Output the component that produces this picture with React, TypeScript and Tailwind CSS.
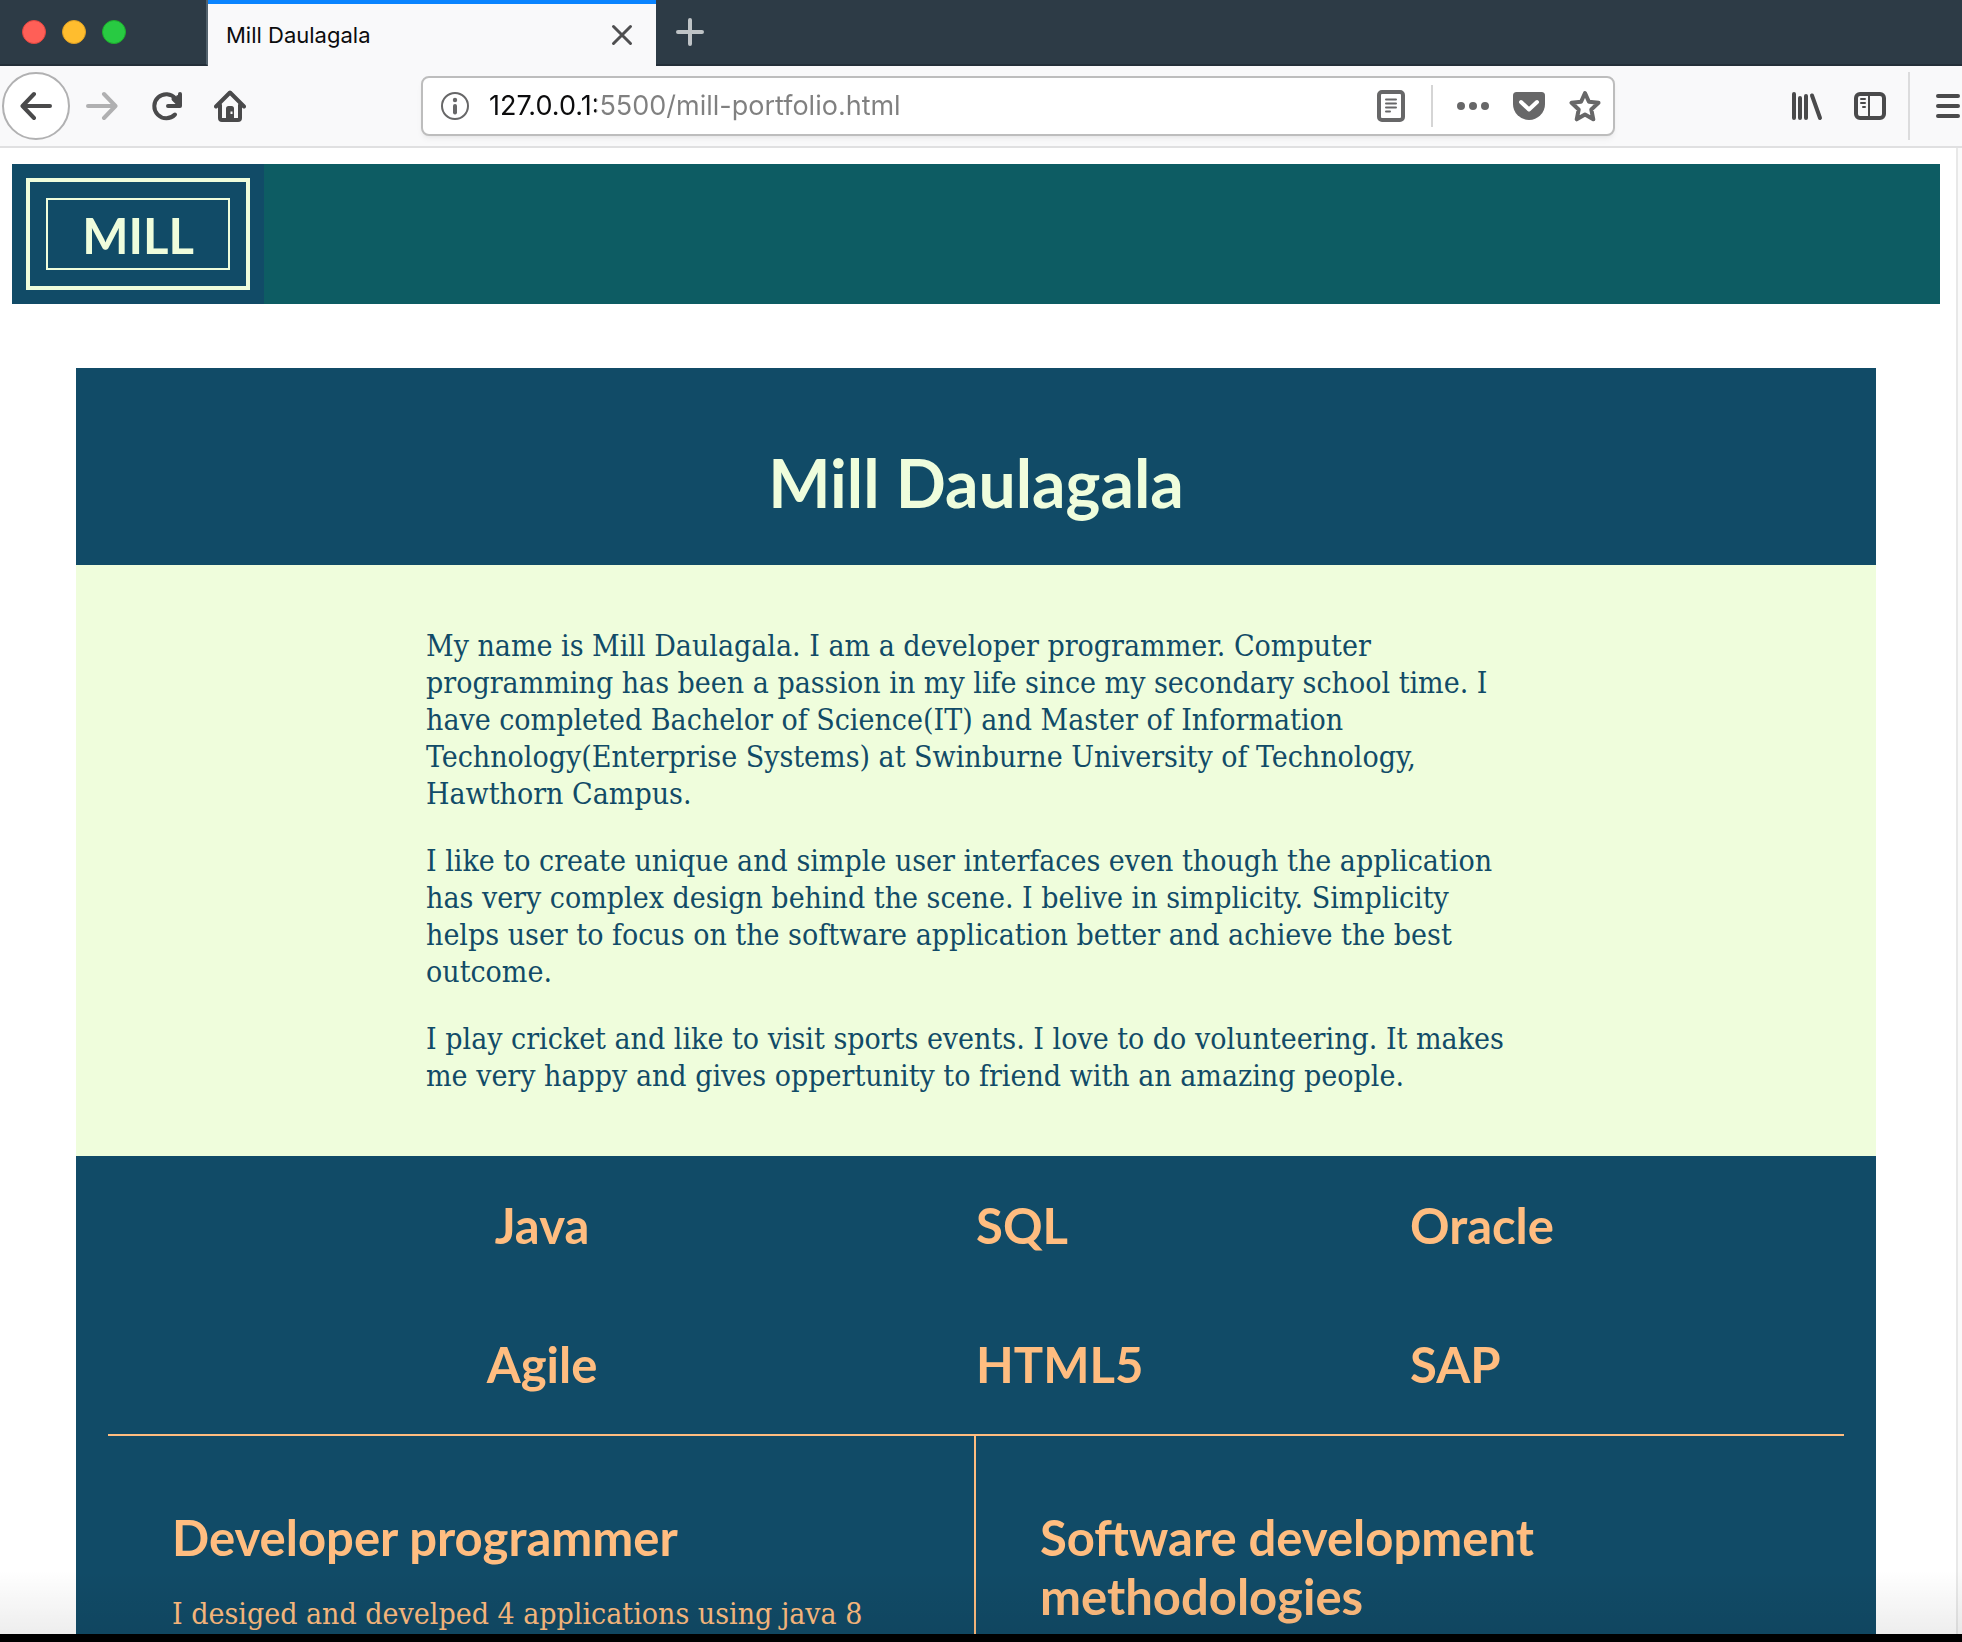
import type { ReactNode } from "react";

const skills = [
  ["Java", "SQL", "Oracle"],
  ["Agile", "HTML5", "SAP"],
];

const about = [
  "My name is Mill Daulagala. I am a developer programmer. Computer programming has been a passion in my life since my secondary school time. I have completed Bachelor of Science(IT) and Master of Information Technology(Enterprise Systems) at Swinburne University of Technology, Hawthorn Campus.",
  "I like to create unique and simple user interfaces even though the application has very complex design behind the scene. I belive in simplicity. Simplicity helps user to focus on the software application better and achieve the best outcome.",
  "I play cricket and like to visit sports events. I love to do volunteering. It makes me very happy and gives oppertunity to friend with an amazing people.",
];

function IconButton({ label, className = "", children }: { label: string; className?: string; children: ReactNode }) {
  return (
    <button type="button" aria-label={label} className={`flex size-8 shrink-0 items-center justify-center ${className}`}>
      {children}
    </button>
  );
}

function Icon({ children }: { children: ReactNode }) {
  return (
    <svg viewBox="0 0 32 32" className="size-8 shrink-0" fill="none" stroke="currentColor" strokeWidth="4" strokeLinecap="round" strokeLinejoin="round" aria-hidden="true">
      {children}
    </svg>
  );
}

function TabBar() {
  return (
    <div className="flex h-[66px] shrink-0 bg-[#2d3b46]">
      <div className="flex w-[208px] shrink-0 items-center gap-4 border-r-2 border-b-2 border-r-[#53626d] border-b-[#242f39] pl-[22px]">
        <button type="button" aria-label="Close window" className="size-6 rounded-full border border-[#e2463f] bg-[#ff5f57]" />
        <button type="button" aria-label="Minimise window" className="size-6 rounded-full border border-[#dfa023] bg-[#ffbd2e]" />
        <button type="button" aria-label="Zoom window" className="size-6 rounded-full border border-[#1dad2b] bg-[#28ca42]" />
      </div>
      <div className="flex w-[448px] shrink-0 items-center justify-between border-t-4 border-[#0a84ff] bg-[#f9f9fa] pr-[18px] pl-[18px]">
        <span className="font-['Inter',sans-serif] text-[22px] text-[#0c0c0d]">Mill Daulagala</span>
        <IconButton label="Close tab" className="text-[#4f4f50]">
          <Icon>
            <path d="M7.500 7.500l17 17M24.500 7.500l-17 17" strokeWidth="3" />
          </Icon>
        </IconButton>
      </div>
      <div className="flex flex-1 items-center border-b-2 border-[#242f39] pl-[18px]">
        <IconButton label="New tab" className="text-[#bec3c6]">
          <Icon>
            <path d="M16 4v24M4 16h24" />
          </Icon>
        </IconButton>
      </div>
    </div>
  );
}

function Toolbar() {
  return (
    <div className="flex h-[82px] shrink-0 items-center border-b-2 border-[#e0e0e1] bg-[#f9f9fa] text-[#4a4a4b]">
      <button type="button" aria-label="Back" className="ml-0.5 flex size-[68px] shrink-0 items-center justify-center rounded-full border-2 border-[#b1b1b2] bg-white">
        <Icon>
          <path d="M30 16H3M14 4L2.500 16L14 28" />
        </Icon>
      </button>
      <IconButton label="Forward" className="ml-4 text-[#b0b0b1]">
        <Icon>
          <path d="M2 16h27M18 4l11.500 12L18 28" />
        </Icon>
      </IconButton>
      <IconButton label="Reload" className="ml-8">
        <Icon>
          <path d="M25.500 8.500A12 12 0 1 0 25 24.500" />
          <path d="M30 4v12H18" />
          <path d="M23.500 9l5 5M28 7v8" />
        </Icon>
      </IconButton>
      <IconButton label="Home" className="ml-8">
        <Icon>
          <path d="M2 16.500L16 2.500L30 16.500" />
          <path d="M6 15v13q0 2 2 2h16q2 0 2-2V15" />
          <path d="M12 29V18.500q0-2.500 2.500-2.500h3q2.500 0 2.500 2.500V29z" fill="currentColor" stroke="none" />
          <rect x="16.500" y="21.500" width="2" height="2.500" fill="#f9f9fa" stroke="none" />
        </Icon>
      </IconButton>

      <div className="mr-[177px] ml-[175px] flex h-[60px] min-w-0 flex-1 items-center rounded-lg border-2 border-[#bdbdbd] bg-white pr-3 pl-4 text-[#676768] shadow-md shadow-black/5">
        <IconButton label="Site information">
          <Icon>
            <circle cx="16" cy="16" r="13" strokeWidth="2" />
            <circle cx="16" cy="10" r="2.200" fill="currentColor" stroke="none" />
            <path d="M16 16v6.500" />
          </Icon>
        </IconButton>
        <input
          type="text"
          aria-label="Address"
          defaultValue="127.0.0.1:5500/mill-portfolio.html"
          className="ml-[18px] min-w-0 flex-1 bg-[linear-gradient(90deg,#0c0c0d_107px,#808080_107px)] bg-clip-text font-['Inter',sans-serif] text-[27px] text-transparent outline-none"
        />
        <IconButton label="Reader view">
          <Icon>
            <rect x="4" y="2" width="24" height="28" rx="3" />
            <path d="M11 9.500h10M11 13.500h10M11 17.500h10M11 21.500h4" strokeWidth="2" />
          </Icon>
        </IconButton>
        <div className="mx-6 h-[42px] w-0.5 bg-[#d5d5d5]" />
        <IconButton label="Page actions" className="mr-6">
          <Icon>
            <path d="M4 16h0M16 16h0M28 16h0" strokeWidth="8" />
          </Icon>
        </IconButton>
        <IconButton label="Save to Pocket" className="mr-6">
          <Icon>
            <path d="M3.500 2h25Q32 2 32 5.500V14a16 16 0 0 1-32 0V5.500Q0 2 3.500 2z" fill="currentColor" stroke="none" />
            <path d="M8 12l8 7.500L24 12" stroke="#ffffff" />
          </Icon>
        </IconButton>
        <IconButton label="Bookmark this page">
          <Icon>
            <path d="M16 3l3.900 8.800l9.600 1l-7.200 6.700l2 9.800L16 24.500l-8.300 4.800l2-9.800L2.500 12.800l9.600-1z" />
          </Icon>
        </IconButton>
      </div>

      <IconButton label="Library">
        <Icon>
          <path d="M2 4v24M8 8v20M14 6v22M20 5.500L28 28" />
        </Icon>
      </IconButton>
      <IconButton label="Sidebars" className="ml-[30px]">
        <Icon>
          <rect x="2" y="4" width="28" height="24" rx="4" />
          <path d="M15 4v24M7 9h4M7 13h4M9 17h2" strokeWidth="2" />
        </Icon>
      </IconButton>
      <div className="ml-[22px] h-[68px] w-0.5 shrink-0 bg-[#dcdcdd]" />
      <IconButton label="Open menu" className="mr-[-4px] ml-6">
        <Icon>
          <path d="M4 6h20M4 16h20M4 26h20" />
        </Icon>
      </IconButton>
    </div>
  );
}

function Portfolio() {
  return (
    <div className="flex flex-1 flex-col pt-4 pr-4 pl-3">
      <nav className="flex shrink-0 bg-[#0d5c63]">
        <a href="#top" className="bg-[#114b67] p-3.5 text-[#effddc]">
          <span className="block border-4 border-[#effddc] p-4">
            <span className="block w-[184px] border-2 border-[#effddc] pt-0.5 text-center font-['Lato',sans-serif] text-[49px] leading-[66px] font-bold">MILL</span>
          </span>
        </a>
      </nav>

      <main id="top" className="mx-16 mt-16 flex flex-1 flex-col bg-[#114b67]">
        <h1 className="px-8 pt-[75px] pb-[42px] text-center font-['Lato',sans-serif] text-[66px] leading-[80px] font-bold text-[#effddc]">Mill Daulagala</h1>

        <section className="flex flex-col gap-[30px] bg-[#effddc] px-[350px] pt-[62px] pb-[62px] font-['DejaVu_Serif_Condensed','DejaVu_Serif',serif] text-[30px] leading-[37px] text-[#114b67]">
          {about.map((text) => (
            <p key={text}>{text}</p>
          ))}
        </section>

        <section className="mx-8 border-b-2 border-[#ffbd80] font-['Lato',sans-serif] text-[49px] leading-[59px] font-bold text-[#ffbd80]">
          {skills.map(([first, second, third]) => (
            <div key={first} className="grid grid-cols-4 py-10">
              <h2 className="col-span-2 text-center">{first}</h2>
              <h2>{second}</h2>
              <h2>{third}</h2>
            </div>
          ))}
        </section>

        <section className="mx-8 grid flex-1 grid-cols-2 text-[#ffbd80]">
          <article className="border-r-2 border-[#ffbd80] px-16 pt-[72px]">
            <h2 className="font-['Lato',sans-serif] text-[49px] leading-[59px] font-bold">Developer programmer</h2>
            <p className="mt-7 font-['DejaVu_Serif_Condensed','DejaVu_Serif',serif] text-[30px] leading-[37px]">I desiged and develped 4 applications using java 8</p>
          </article>
          <article className="px-16 pt-[72px]">
            <h2 className="font-['Lato',sans-serif] text-[49px] leading-[59px] font-bold">Software development methodologies</h2>
          </article>
        </section>
      </main>
    </div>
  );
}

export default function App() {
  return (
    <div className="flex h-screen flex-col overflow-hidden border-b-8 border-black bg-white">
      <TabBar />
      <Toolbar />
      <div className="relative flex min-h-0 flex-1 overflow-hidden">
        <Portfolio />
        <div className="w-1.5 shrink-0 border-l-2 border-[#e8e8e8] bg-[#fafafa]" />
        <div className="pointer-events-none absolute inset-x-0 bottom-0 h-16 bg-linear-to-b from-transparent to-black/7" />
      </div>
    </div>
  );
}
